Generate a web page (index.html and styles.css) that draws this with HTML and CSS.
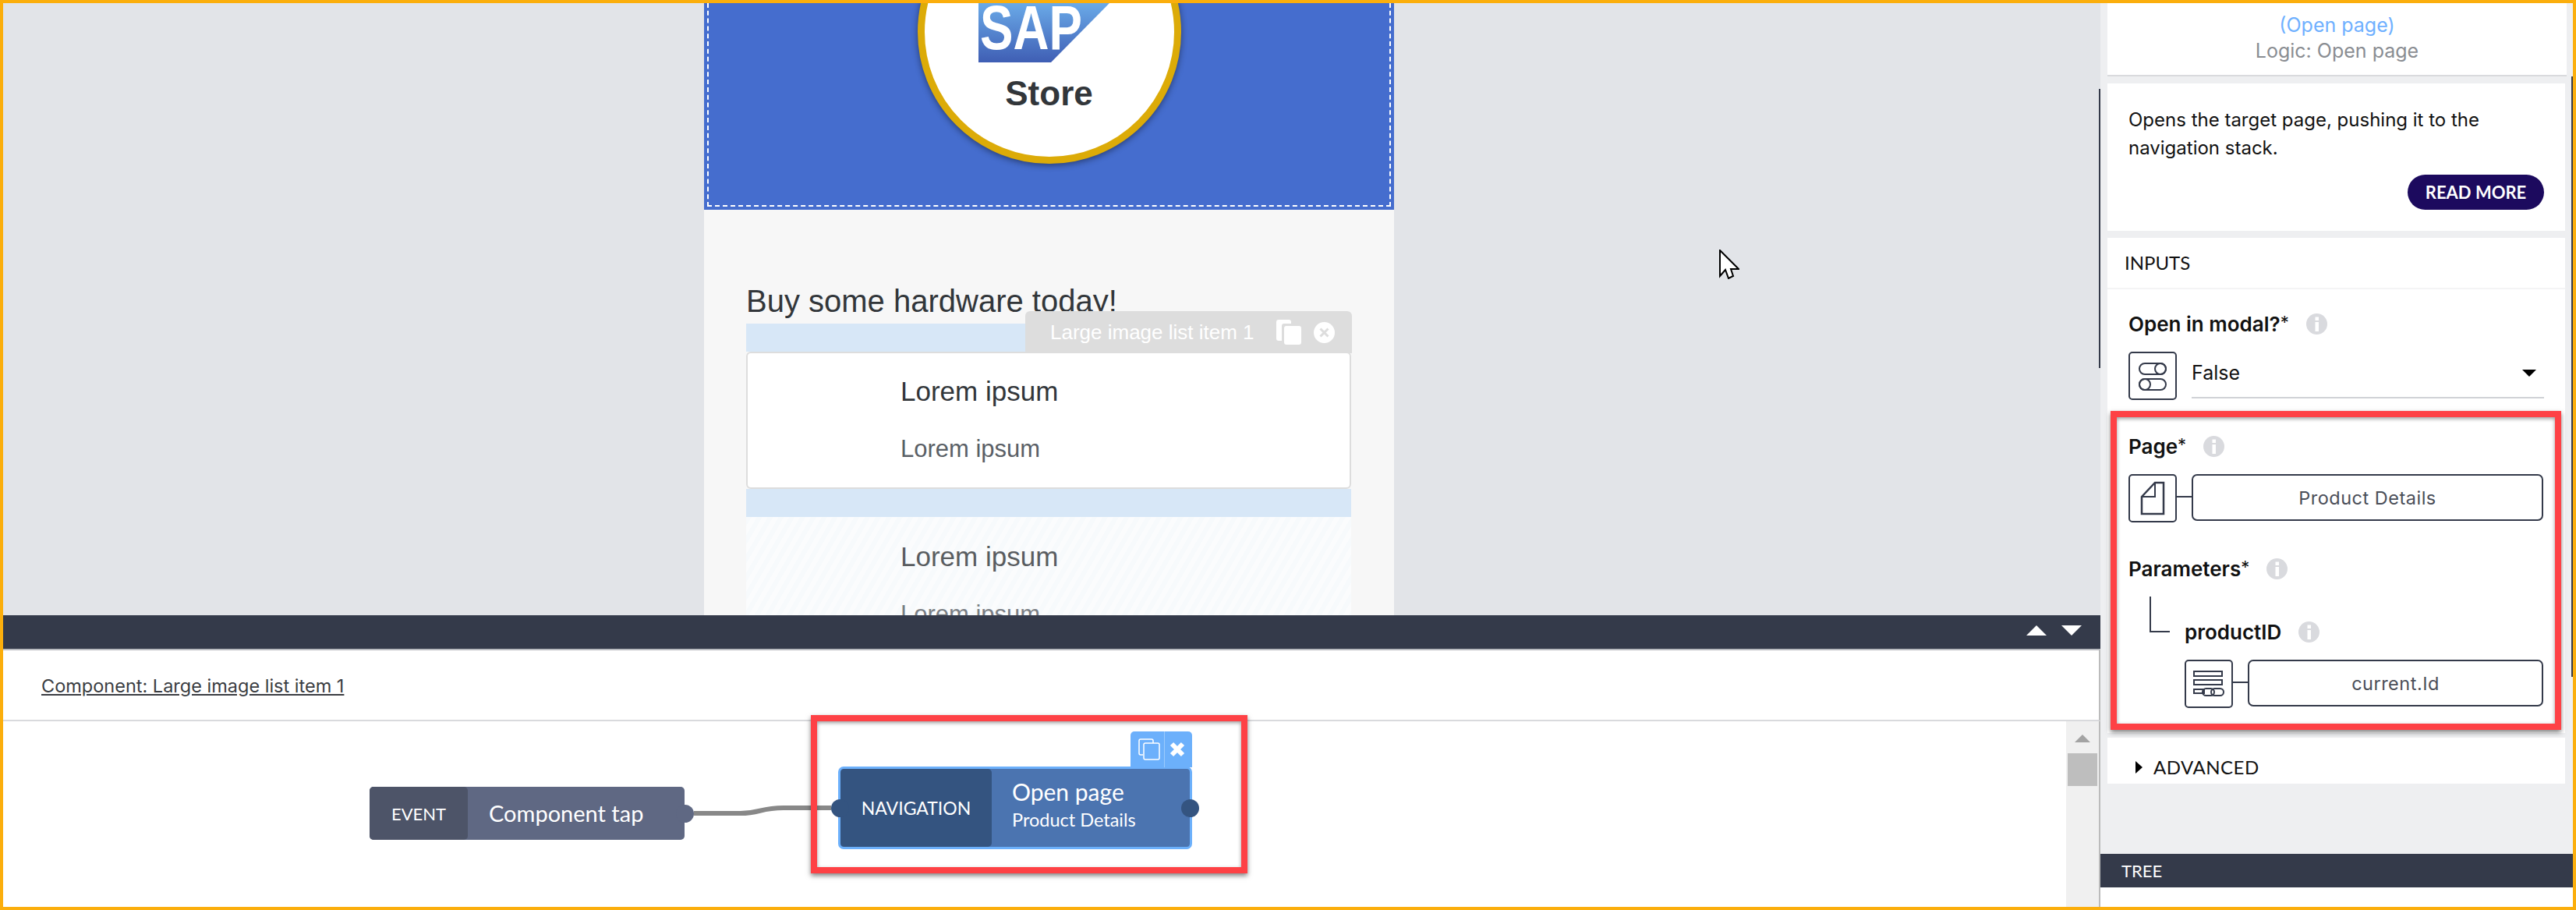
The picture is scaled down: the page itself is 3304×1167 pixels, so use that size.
FILE: index.html
```html
<!DOCTYPE html>
<html lang="en">
<head>
    <meta charset="UTF-8">
    <title>Logic editor</title>
    <link rel="stylesheet" href="styles.css">
</head>
<body>
    <svg class="defs" width="0" height="0">
        <symbol id="info" viewBox="0 0 27 27">
            <circle cx="13.5" cy="13.5" r="13.5" fill="#d9dade"/>
            <rect x="11.5" y="11" width="4.5" height="12" fill="#fff"/>
            <rect x="11.5" y="4.5" width="4.5" height="4.5" fill="#fff"/>
        </symbol>
    </svg>

    <div class="frame">
        <div class="main">
            <div class="canvas">
                <div class="phone">
                    <div class="app-header">
                        <div class="header-select">
                            <div class="badge">
                                <svg class="sap-logo" width="168" height="76" viewBox="0 0 168 76">
                                    <defs>
                                        <linearGradient id="sapfill" x1="0" y1="0" x2="0" y2="1">
                                            <stop offset="0" stop-color="#6aaae8"/>
                                            <stop offset="1" stop-color="#3f5eb4"/>
                                        </linearGradient>
                                    </defs>
                                    <polygon points="0,0 168,0 93,76 0,76" fill="url(#sapfill)"/>
                                    <text x="2" y="59" class="sap-text" textLength="131" lengthAdjust="spacingAndGlyphs">SAP</text>
                                </svg>
                                <div class="badge-name">Store</div>
                            </div>
                        </div>
                    </div>
                    <div class="app-content">
                        <h1 class="app-title">Buy some hardware today!</h1>
                        <div class="list">
                            <div class="select-tab">
                                <span class="tab-name">Large image list item 1</span>
                                <svg width="32" height="32" viewBox="0 0 32 32">
                                    <path d="M3 0h13a3 3 0 0 1 3 3v2H10a3 3 0 0 0-3 3v19H3a3 3 0 0 1-3-3V3a3 3 0 0 1 3-3z" fill="#fff"/>
                                    <rect x="10" y="8" width="22" height="24" rx="3" fill="#fff"/>
                                </svg>
                                <svg width="27" height="27" viewBox="0 0 27 27">
                                    <circle cx="13.5" cy="13.5" r="13.5" fill="#fff"/>
                                    <path d="M8.5 8.5l10 10M18.5 8.5l-10 10" stroke="#ddd" stroke-width="3"/>
                                </svg>
                            </div>
                            <div class="drop-zone"></div>
                            <div class="list-item">
                                <div class="item-title">Lorem ipsum</div>
                                <div class="item-sub">Lorem ipsum</div>
                            </div>
                            <div class="drop-zone"></div>
                            <div class="list-item-ghost">
                                <div class="item-title">Lorem ipsum</div>
                                <div class="item-sub">Lorem ipsum</div>
                            </div>
                        </div>
                    </div>
                </div>
                <div class="splitter"></div>
                <svg class="cursor" width="26" height="38" viewBox="-1 -1 26 38">
                    <polygon points="0,0 24,24 14,24 17,33 11,36 7,25 0,33" fill="#fff" stroke="#000" stroke-width="2"/>
                </svg>
            </div>

            <div class="editor-bar">
                <span class="arrow-up"></span>
                <span class="arrow-down"></span>
            </div>

            <div class="editor-head">
                <a class="component-link">Component: Large image list item 1</a>
            </div>

            <div class="logic">
                <svg class="wire" width="176" height="20" viewBox="0 0 176 20">
                    <path d="M0 13H60C85 13 85 6 115 6H176" fill="none" stroke="#888" stroke-width="6"/>
                </svg>

                <div class="node node-event">
                    <div class="node-kind">EVENT</div>
                    <div class="node-name">Component tap</div>
                    <span class="port port-out"></span>
                </div>

                <div class="node node-nav">
                    <div class="node-tools">
                        <svg width="28" height="28" viewBox="0 0 28 28" fill="none" stroke="#fff" stroke-width="1.5">
                            <path d="M6 21H3a2 2 0 0 1-2-2V3a2 2 0 0 1 2-2h14a2 2 0 0 1 2 2v3"/>
                            <rect x="7" y="6" width="20" height="21" rx="2"/>
                        </svg>
                        <span class="tool-sep"></span>
                        <svg width="20" height="20" viewBox="0 0 20 20">
                            <path d="M3 3l14 14M17 3L3 17" stroke="#fff" stroke-width="6"/>
                        </svg>
                    </div>
                    <span class="port port-in"></span>
                    <div class="node-kind">NAVIGATION</div>
                    <div class="node-text">
                        <div class="node-title">Open page</div>
                        <div class="node-sub">Product Details</div>
                    </div>
                    <span class="port port-out"></span>
                </div>

                <div class="highlight highlight-node"></div>

                <div class="scroller">
                    <span class="scroll-up"></span>
                    <span class="scroll-thumb"></span>
                </div>
            </div>
        </div>

        <aside class="panel">
            <section class="card card-title">
                <div class="flow-name">(Open page)</div>
                <div class="flow-kind">Logic: Open page</div>
            </section>

            <section class="card card-desc">
                <p class="desc">Opens the target page, pushing it to the navigation stack.</p>
                <button class="read-more">READ MORE</button>
            </section>

            <section class="card card-inputs">
                <div class="inputs-head">INPUTS</div>
                <div class="inputs-body">
                    <div class="prop-label first">Open in modal?<sup>*</sup><svg class="info"><use href="#info"/></svg></div>
                    <div class="prop-row">
                        <div class="binding">
                            <svg width="38" height="38" viewBox="0 0 38 38" fill="none" stroke="#343a4a" stroke-width="2">
                                <rect x="2" y="3" width="34" height="14" rx="7"/>
                                <circle cx="29" cy="10" r="7"/>
                                <rect x="2" y="23" width="34" height="14" rx="7"/>
                                <circle cx="9" cy="30" r="7"/>
                            </svg>
                        </div>
                        <div class="select-value">
                            <span>False</span>
                            <span class="caret"></span>
                        </div>
                    </div>

                    <div class="prop-label">Page<sup>*</sup><svg class="info"><use href="#info"/></svg></div>
                    <div class="prop-row">
                        <div class="binding">
                            <svg width="32" height="44" viewBox="0 0 32 44" fill="none" stroke="#343a4a" stroke-width="2">
                                <path d="M2 20L19 2H30V42H2Z" stroke-width="2.5"/>
                                <path d="M19 2V20H2"/>
                            </svg>
                        </div>
                        <span class="connector"></span>
                        <div class="field">Product Details</div>
                    </div>

                    <div class="prop-label">Parameters<sup>*</sup><svg class="info"><use href="#info"/></svg></div>
                    <div class="param-head">
                        <span class="elbow"></span>
                        <div class="prop-label param-label">productID<svg class="info"><use href="#info"/></svg></div>
                    </div>
                    <div class="prop-row param-row">
                        <div class="binding">
                            <svg width="40" height="34" viewBox="0 0 40 34" fill="none" stroke="#343a4a" stroke-width="2">
                                <rect x="1" y="1" width="36" height="6"/>
                                <rect x="1" y="12" width="36" height="6"/>
                                <path d="M1 24H14V29H1Z"/>
                                <rect x="12" y="23" width="15" height="9" rx="4.5"/>
                                <rect x="23" y="23" width="16" height="9" rx="4.5"/>
                            </svg>
                        </div>
                        <span class="connector"></span>
                        <div class="field field-param">current.Id</div>
                    </div>
                </div>
            </section>

            <section class="card card-advanced">
                <span class="caret-right"></span>
                <span>ADVANCED</span>
            </section>

            <div class="tree">
                <div class="tree-bar">TREE</div>
                <div class="tree-body"></div>
            </div>

            <div class="highlight highlight-inputs"></div>
            <div class="panel-edge"></div>
        </aside>
    </div>
</body>
</html>
```

FILE: styles.css
```css
* {
    box-sizing: border-box;
}
html, body {
    margin: 0;
    padding: 0;
}
body {
    font-family: "Lato", "Liberation Sans", sans-serif;
    background: #fff;
}
.defs {
    position: absolute;
}
.frame {
    width: 3304px;
    height: 1167px;
    border: 4px solid #fbae0c;
    display: grid;
    grid-template-columns: 2690px 1fr;
    overflow: hidden;
}

/* preview */
.main {
    display: flex;
    flex-direction: column;
    height: 1159px;
}
.canvas {
    position: relative;
    height: 785px;
    background: #e2e4e8;
    overflow: hidden;
}
.splitter {
    position: absolute;
    right: 0;
    top: 110px;
    width: 2px;
    height: 358px;
    background: #343a4a;
}
.cursor {
    position: absolute;
    left: 2201px;
    top: 316px;
}
.phone {
    width: 885px;
    margin-left: 899px;
    height: 785px;
    background: #f7f7f7;
    font-family: "Liberation Sans", sans-serif;
}
.app-header {
    height: 265px;
    background: #456dce;
    padding: 0 4px 4px;
    overflow: hidden;
}
.header-select {
    height: 100%;
    border: 2px dashed #fff;
    border-top: none;
    display: flex;
    justify-content: center;
}
.badge {
    flex-shrink: 0;
    width: 338px;
    height: 338px;
    margin-top: -132px;
    padding-top: 123px;
    border: 9px solid #dcab08;
    border-radius: 50%;
    background: #fff;
    box-shadow: 0 2px 8px rgba(0, 0, 0, 0.45);
    display: flex;
    flex-direction: column;
    align-items: center;
}
.sap-logo {
    flex-shrink: 0;
    margin-left: -14px;
}
.sap-text {
    font-family: "Liberation Sans", sans-serif;
    font-weight: bold;
    font-size: 80px;
    fill: #fff;
}
.badge-name {
    margin-top: 15px;
    font-size: 44px;
    line-height: 50px;
    font-weight: bold;
    color: #32363a;
}
.app-content {
    padding: 94px 55px 0 54px;
}
.app-title {
    margin: 0 0 6px;
    font-size: 40px;
    line-height: 46px;
    font-weight: normal;
    color: #32363a;
}
.list {
    position: relative;
}
.select-tab {
    position: absolute;
    left: 358px;
    top: -16px;
    width: 419px;
    height: 54px;
    padding-left: 32px;
    background: #ddd;
    border-radius: 6px 6px 0 0;
    display: flex;
    align-items: center;
    z-index: 2;
}
.tab-name {
    font-size: 26px;
    color: #fff;
    width: 290px;
    white-space: nowrap;
}
.select-tab svg:last-child {
    margin-left: 16px;
}
.drop-zone {
    height: 36px;
    background: #d7e7f7;
}
.list-item {
    height: 176px;
    padding: 29px 0 0 196px;
    background: #fff;
    border: 2px solid #ddd;
    border-radius: 6px;
}
.list-item-ghost {
    height: 130px;
    padding: 31px 0 0 198px;
    background: repeating-linear-gradient(120deg, #f7fafc 0, #f7fafc 6px, #fbfcfd 6px, #fbfcfd 12px);
}
.list-item-ghost .item-title,
.list-item-ghost .item-sub {
    opacity: 0.8;
}
.item-title {
    font-size: 35px;
    line-height: 40px;
    color: #32363a;
}
.item-sub {
    margin-top: 34px;
    font-size: 31px;
    line-height: 40px;
    color: #5a5f66;
}

/* logic editor */
.editor-bar {
    height: 45px;
    background: #343a4a;
    border-bottom: 2px solid #b9bbc0;
    padding: 13px 24px 0 0;
    display: flex;
    justify-content: flex-end;
    gap: 19px;
}
.arrow-up {
    width: 0;
    height: 0;
    border-left: 13px solid transparent;
    border-right: 13px solid transparent;
    border-bottom: 13px solid #fff;
}
.arrow-down {
    width: 0;
    height: 0;
    border-left: 13px solid transparent;
    border-right: 13px solid transparent;
    border-top: 13px solid #fff;
}
.editor-head {
    height: 91px;
    padding: 32px 0 0 49px;
    background: #fff;
    border-bottom: 2px solid #d9dadd;
    border-right: 2px solid #bbb;
}
.component-link {
    font-family: "Inter", sans-serif;
    font-size: 23.5px;
    line-height: 28px;
    color: #3a3d42;
    text-decoration: underline;
}
.logic {
    position: relative;
    flex: 1;
    background: #fff;
    border-right: 2px solid #bbb;
}
.wire {
    position: absolute;
    left: 886px;
    top: 105px;
}
.node {
    position: absolute;
    display: flex;
    color: #fff;
}
.node-event {
    left: 470px;
    top: 84px;
    width: 404px;
    height: 68px;
    background: #5f6883;
    border-radius: 5px;
}
.node-event .node-kind {
    width: 126px;
    background: #4d5468;
    border-radius: 5px;
}
.node-kind {
    display: flex;
    align-items: center;
    justify-content: center;
    font-size: 22px;
}
.node-name {
    font-size: 29px;
    line-height: 68px;
    padding-left: 27px;
}
.port {
    position: absolute;
    width: 23px;
    height: 23px;
    border-radius: 50%;
}
.node-event .port-out {
    right: -12px;
    top: 23px;
    background: #5f6883;
}
.node-nav {
    left: 1071px;
    top: 58px;
    width: 454px;
    height: 106px;
    background: #4b74b0;
    border: 3px solid #6cb0fb;
    border-radius: 7px;
}
.node-nav .node-kind {
    width: 194px;
    background: #345480;
    border-radius: 5px;
    font-size: 23px;
}
.node-text {
    padding: 10px 0 0 26px;
}
.node-title {
    font-size: 30px;
    line-height: 38px;
}
.node-sub {
    font-size: 23.5px;
    line-height: 30px;
    margin-top: 2px;
}
.node-nav .port {
    background: #345480;
    top: 39px;
}
.port-in {
    left: -12px;
}
.node-nav .port-out {
    right: -12px;
}
.node-tools {
    position: absolute;
    right: -3px;
    top: -48px;
    width: 79px;
    height: 46px;
    padding-left: 10px;
    background: #6cb0fb;
    border-radius: 5px 5px 0 0;
    display: flex;
    align-items: center;
}
.tool-sep {
    width: 1px;
    height: 46px;
    margin: 0 6px 0 5px;
    background: #9ccbfc;
}
.scroller {
    position: absolute;
    right: 0;
    top: 0;
    bottom: 0;
    width: 42px;
    background: #f0f0f0;
    display: flex;
    flex-direction: column;
    align-items: center;
    padding-top: 17px;
}
.scroll-up {
    width: 0;
    height: 0;
    border-left: 10px solid transparent;
    border-right: 10px solid transparent;
    border-bottom: 10px solid #a3a3a3;
}
.scroll-thumb {
    width: 38px;
    height: 42px;
    margin-top: 14px;
    background: #bebebe;
}
.highlight {
    position: absolute;
    border: 8px solid #fe4145;
    box-shadow: 0 3px 6px rgba(0, 0, 0, 0.5), inset 0 2px 5px rgba(0, 0, 0, 0.4);
    z-index: 3;
}
.highlight-node {
    left: 1036px;
    top: -8px;
    width: 560px;
    height: 203px;
}

/* right panel */
.panel {
    position: relative;
    height: 1159px;
    background: #eeeff1;
    padding-left: 9px;
    display: flex;
    flex-direction: column;
}
.card {
    width: 587px;
    background: #fff;
}
.card-title {
    width: 589px;
    height: 94px;
    margin-bottom: 9px;
    padding-top: 12px;
    border-bottom: 2px solid #d9dadd;
    text-align: center;
    font-family: "Inter", sans-serif;
    font-size: 25px;
    line-height: 33px;
}
.flow-name {
    color: #6fb0ff;
}
.flow-kind {
    color: #8a8d92;
}
.card-desc {
    height: 189px;
    margin-bottom: 9px;
    padding: 29px 27px 0;
    display: flex;
    flex-direction: column;
}
.desc {
    margin: 0;
    max-width: 500px;
    font-family: "Inter", sans-serif;
    font-size: 24px;
    line-height: 36px;
    color: #111;
}
.read-more {
    align-self: flex-end;
    width: 175px;
    height: 45px;
    margin-top: 16px;
    border: none;
    border-radius: 23px;
    background: #1c0a5e;
    color: #fff;
    font-family: inherit;
    font-size: 22px;
    font-weight: bold;
}
.card-inputs {
    height: 635px;
}
.inputs-head {
    height: 66px;
    padding: 18px 0 0 22px;
    border-bottom: 2px solid #f4f4f5;
    font-size: 24px;
    line-height: 28px;
    color: #111;
}
.inputs-body {
    padding: 0 27px;
}
.prop-label {
    display: flex;
    align-items: center;
    height: 27px;
    margin-top: 46px;
    font-family: "Inter", sans-serif;
    font-size: 26px;
    font-weight: 600;
    color: #111;
}
.prop-label.first {
    margin-top: 31px;
}
.prop-label sup {
    font-size: 22px;
    font-weight: normal;
    line-height: 1;
    align-self: flex-start;
}
.info {
    width: 27px;
    height: 27px;
    margin-left: 22px;
}
.prop-row {
    display: flex;
    align-items: flex-start;
    margin-top: 22px;
}
.binding {
    width: 62px;
    height: 62px;
    border: 2px solid #343a4a;
    border-radius: 5px;
    display: flex;
    align-items: center;
    justify-content: center;
    flex-shrink: 0;
}
.connector {
    width: 19px;
    height: 30px;
    border-bottom: 2px solid #343a4a;
}
.select-value {
    width: 452px;
    height: 60px;
    margin-left: 19px;
    padding: 0 10px 4px 0;
    border-bottom: 2px solid #d0d2d6;
    display: flex;
    align-items: center;
    justify-content: space-between;
    font-family: "Inter", sans-serif;
    font-size: 25px;
    color: #111;
}
.caret {
    width: 0;
    height: 0;
    border-left: 9px solid transparent;
    border-right: 9px solid transparent;
    border-top: 9px solid #000;
}
.field {
    width: 451px;
    height: 60px;
    border: 2px solid #343a4a;
    border-radius: 7px;
    display: flex;
    align-items: center;
    justify-content: center;
    font-family: "Inter", sans-serif;
    font-size: 23.5px;
    letter-spacing: 0.5px;
    color: #4a4e58;
}
.field-param {
    width: 379px;
}
.param-head {
    display: flex;
    align-items: flex-end;
    margin-top: 22px;
}
.elbow {
    width: 26px;
    height: 46px;
    margin: 0 19px 13px 27px;
    border-left: 2px solid #343a4a;
    border-bottom: 2px solid #343a4a;
}
.param-label {
    margin-top: 0;
}
.param-row {
    margin-left: 72px;
}
.card-advanced {
    height: 59px;
    margin-top: 6px;
    padding: 16px 0 0 36px;
    display: flex;
    align-items: center;
    gap: 14px;
    font-size: 24px;
    letter-spacing: 0.5px;
    color: #111;
}
.caret-right {
    width: 0;
    height: 0;
    border-top: 8px solid transparent;
    border-bottom: 8px solid transparent;
    border-left: 9px solid #000;
}
.tree {
    margin: auto 0 0 -9px;
}
.tree-bar {
    height: 43px;
    padding-left: 27px;
    background: #343a4a;
    color: #fff;
    font-size: 22px;
    line-height: 43px;
}
.tree-body {
    height: 25px;
    background: #fff;
}
.highlight-inputs {
    left: 13px;
    top: 523px;
    width: 578px;
    height: 409px;
}
.panel-edge {
    position: absolute;
    right: 0;
    top: 94px;
    width: 2px;
    height: 770px;
    background: #343a4a;
}
```
